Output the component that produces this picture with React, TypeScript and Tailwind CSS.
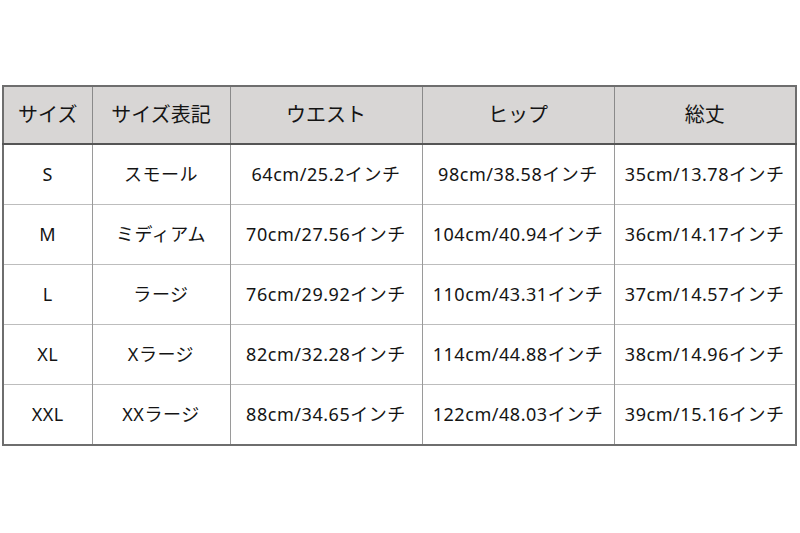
import React from "react";

const header = ["サイズ", "サイズ表記", "ウエスト", "ヒップ", "総丈"];
const rows = [
  ["S", "スモール", "64cm/25.2インチ", "98cm/38.58インチ", "35cm/13.78インチ"],
  ["M", "ミディアム", "70cm/27.56インチ", "104cm/40.94インチ", "36cm/14.17インチ"],
  ["L", "ラージ", "76cm/29.92インチ", "110cm/43.31インチ", "37cm/14.57インチ"],
  ["XL", "Xラージ", "82cm/32.28インチ", "114cm/44.88インチ", "38cm/14.96インチ"],
  ["XXL", "XXラージ", "88cm/34.65インチ", "122cm/48.03インチ", "39cm/15.16インチ"],
];

export default function App() {
  return (
    <div
      className="w-[800px] h-[533px] bg-white pt-[85px] pl-[2px] text-[#141414]"
      style={{ fontFamily: '"Noto Sans", "Noto Sans CJK JP", sans-serif' }}
    >
      <table className="table-fixed border-collapse border-2 border-[#6e6e6e] w-[795px]">
        <colgroup>
          <col className="w-[89px]" />
          <col className="w-[138px]" />
          <col className="w-[192px]" />
          <col className="w-[192px]" />
          <col />
        </colgroup>
        <thead>
          <tr className="h-[58px] bg-[#d8d6d5] border-b-2 border-[#555555]">
            {header.map((h, i) => (
              <th
                key={i}
                className="border-l border-[#8a8a8a] first:border-l-0 text-center font-normal text-[20px] p-0"
              >
                {h}
              </th>
            ))}
          </tr>
        </thead>
        <tbody>
          {rows.map((r, ri) => (
            <tr key={ri} className={`${ri === 4 ? "h-[61px]" : "h-[60px]"} border-t border-[#bdbdbd] first:border-t-0`}>
              {r.map((c, ci) => (
                <td
                  key={ci}
                  className="border-l border-[#9a9a9a] first:border-l-0 text-center p-0 text-[18px] tracking-[0.03em]"
                >
                  {c}
                </td>
              ))}
            </tr>
          ))}
        </tbody>
      </table>
    </div>
  );
}
